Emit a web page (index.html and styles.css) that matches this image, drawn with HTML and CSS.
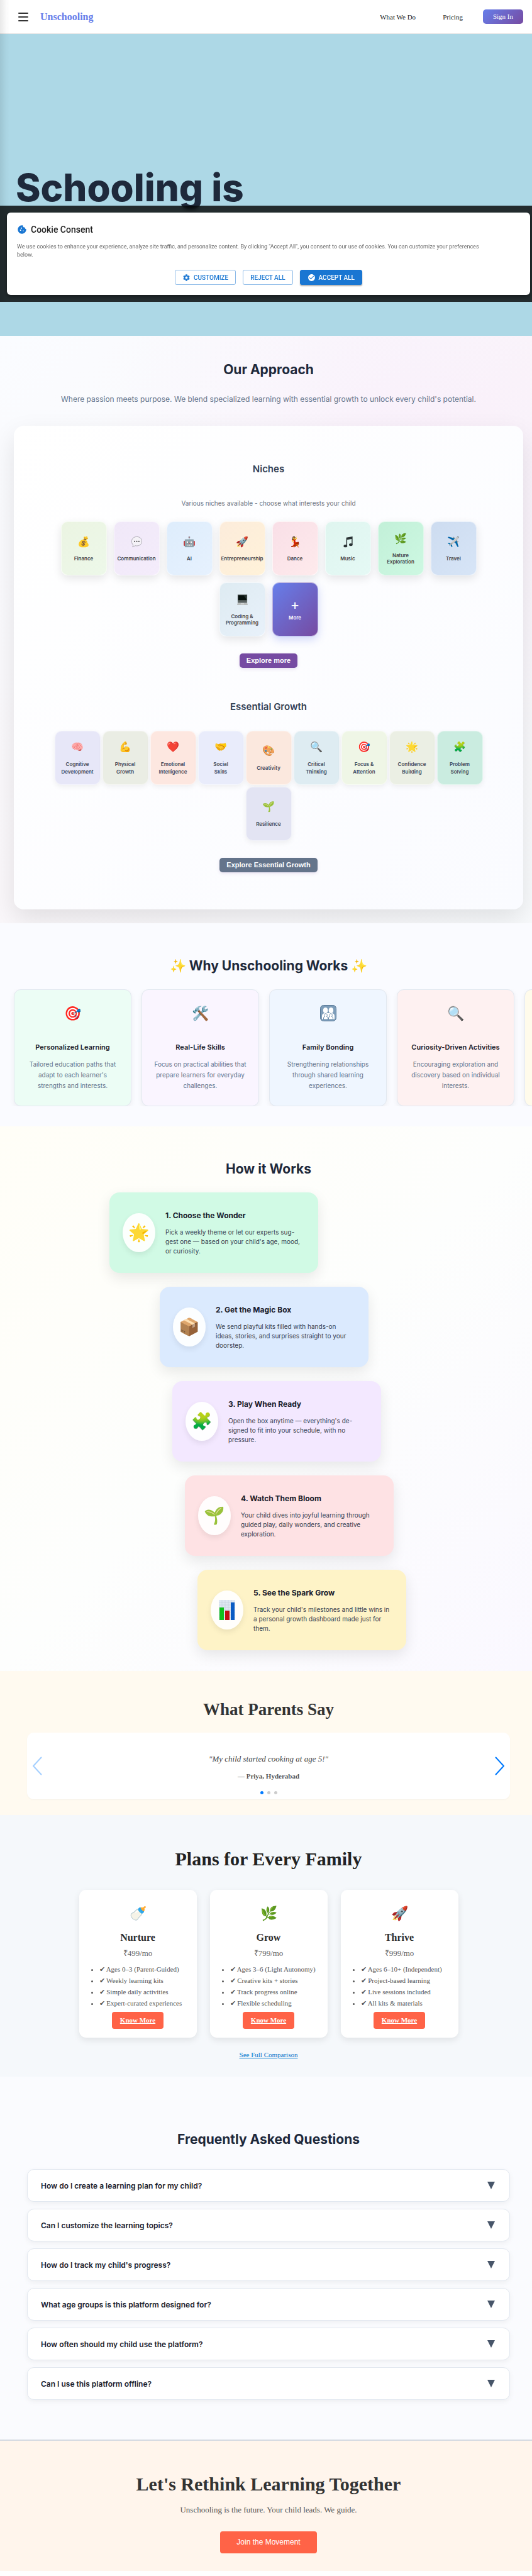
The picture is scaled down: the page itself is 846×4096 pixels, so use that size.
FILE: index.html
```html
<!DOCTYPE html>
<html lang="en">
<head>
<meta charset="utf-8">
<meta name="viewport" content="width=device-width, initial-scale=1">
<title>Unschooling</title>
<link rel="stylesheet" href="styles.css">
</head>
<body>
<header class="nav">
  <button class="menu" aria-label="Open menu"><span></span><span></span><span></span></button>
  <a class="logo" href="#">Unschooling</a>
  <nav class="links">
    <a href="#">What We Do</a>
    <a href="#">Pricing</a>
    <a class="signin" href="#">Sign In</a>
  </nav>
</header>

<main>
<section class="hero">
  <h1>Schooling is</h1>
</section>

<section class="approach">
  <h2>Our Approach</h2>
  <p class="lead">Where passion meets purpose. We blend specialized learning with essential growth to unlock every child's potential.</p>
  <div class="panel">
    <h3>Niches</h3>
    <p class="hint">Various niches available - choose what interests your child</p>
    <div class="tiles">
      <div class="tile finance"><span class="pic">💰</span><span>Finance</span></div>
      <div class="tile communication"><span class="pic"><svg viewBox="0 0 20 20"><path d="M10 1.500c5 0 8.500 3.300 8.500 7.700s-3.500 7.600-8.500 7.600c-1 0-2-.1-2.900-.4-1 1-2.500 1.900-4.300 2.100.8-.9 1.200-2 1.200-3.200C2.400 14 1.500 11.800 1.500 9.200c0-4.400 3.500-7.700 8.500-7.700z" fill="#f4f2f7" stroke="#aaa7b0"/><g fill="#444"><circle cx="6.400" cy="9.200" r="1.100"/><circle cx="10" cy="9.200" r="1.100"/><circle cx="13.600" cy="9.200" r="1.100"/></g></svg></span><span>Communication</span></div>
      <div class="tile ai"><span class="pic">🤖</span><span>AI</span></div>
      <div class="tile entre"><span class="pic">🚀</span><span>Entrepreneurship</span></div>
      <div class="tile dance"><span class="pic">💃</span><span>Dance</span></div>
      <div class="tile music"><span class="pic"><svg viewBox="0 0 20 20" fill="#2b3335"><path d="M7 3 17.500 1V14.500H16V5.200L8.500 6.700V17H7Z"/><ellipse cx="5.600" cy="17" rx="3" ry="2.300"/><ellipse cx="14.600" cy="14.800" rx="3" ry="2.300"/></svg></span><span>Music</span></div>
      <div class="tile nature"><span class="pic">🌿</span><span>Nature<br>Exploration</span></div>
      <div class="tile travel"><span class="pic">✈️</span><span>Travel</span></div>
      <div class="tile coding"><span class="pic"><svg viewBox="0 0 20 20"><path d="M2 1.500h16V12H2Z" fill="#59605f"/><path d="M3 2.500h14V11H3Z" fill="#06100d"/><path d="M12 2.500h5V10Z" fill="#26332f"/><path d="M2 12h16v3.500H2Z" fill="#6f7776"/><path d="M3 13h14M3 14.500h14" stroke="#3c4443" stroke-width=".6"/><path d="M2 15.500h16l1 3.500H1Z" fill="#b9bdbd"/><path d="M7.500 16h5l.5 2h-6Z" fill="#d5d8d8"/></svg></span><span>Coding &amp;<br>Programming</span></div>
      <div class="tile more"><span class="pic plus">+</span><span>More</span></div>
    </div>
    <button class="explore">Explore more</button>
    <h3 class="second">Essential Growth</h3>
    <div class="tiles growth">
      <div class="tile cognitive"><span class="pic">🧠</span><span>Cognitive<br>Development</span></div>
      <div class="tile physical"><span class="pic">💪</span><span>Physical<br>Growth</span></div>
      <div class="tile emotional"><span class="pic">❤️</span><span>Emotional<br>Intelligence</span></div>
      <div class="tile social"><span class="pic">🤝</span><span>Social<br>Skills</span></div>
      <div class="tile creative"><span class="pic">🎨</span><span>Creativity</span></div>
      <div class="tile critical"><span class="pic">🔍</span><span>Critical<br>Thinking</span></div>
      <div class="tile focus"><span class="pic">🎯</span><span>Focus &amp;<br>Attention</span></div>
      <div class="tile confidence"><span class="pic">🌟</span><span>Confidence<br>Building</span></div>
      <div class="tile problem"><span class="pic">🧩</span><span>Problem<br>Solving</span></div>
      <div class="tile resilience"><span class="pic">🌱</span><span>Resilience</span></div>
    </div>
    <button class="explore slate">Explore Essential Growth</button>
  </div>
</section>

<section class="why">
  <h2>✨ Why Unschooling Works ✨</h2>
  <div class="reasons">
    <article class="reason mint"><div class="pic">🎯</div><h3>Personalized Learning</h3><p>Tailored education paths that adapt to each learner's strengths and interests.</p></article>
    <article class="reason lilac"><div class="pic">🛠️</div><h3>Real-Life Skills</h3><p>Focus on practical abilities that prepare learners for everyday challenges.</p></article>
    <article class="reason sky"><div class="pic"><svg viewBox="0 0 26 26"><rect x=".5" y=".5" width="25" height="25" rx="5" fill="#7d9dba" stroke="#5a7a99"/><g fill="#fff"><ellipse cx="8.600" cy="8.500" rx="3.700" ry="4.500"/><ellipse cx="17.400" cy="8.500" rx="3.700" ry="4.500"/><path d="M3 22.500v-5c0-3 2-4.500 5-4.500h10c3 0 5 1.500 5 4.500v5Z"/></g><g fill="#fff" stroke="#6f90ae"><path d="M5.500 23v-2c0-1.500 1-2.500 2.400-2.700a2.400 2.400 0 1 1 2.200 0c1.400.2 2.400 1.200 2.400 2.700v2Z"/><path d="M13.500 23v-2c0-1.500 1-2.500 2.400-2.700a2.400 2.400 0 1 1 2.200 0c1.400.2 2.400 1.200 2.400 2.700v2Z"/></g></svg></div><h3>Family Bonding</h3><p>Strengthening relationships through shared learning experiences.</p></article>
    <article class="reason rose"><div class="pic">🔍</div><h3>Curiosity-Driven Activities</h3><p>Encouraging exploration and discovery based on individual interests.</p></article>
    <article class="reason cream"></article>
  </div>
</section>

<section class="how">
  <h2>How it Works</h2>
  <div class="steps">
    <article class="step s1"><div class="disc">🌟</div><div><h3>1. Choose the Wonder</h3><p>Pick a weekly theme or let our experts sug-<br>gest one — based on your child's age, mood,<br>or curiosity.</p></div></article>
    <article class="step s2"><div class="disc">📦</div><div><h3>2. Get the Magic Box</h3><p>We send playful kits filled with hands-on<br>ideas, stories, and surprises straight to your doorstep.</p></div></article>
    <article class="step s3"><div class="disc">🧩</div><div><h3>3. Play When Ready</h3><p>Open the box anytime — everything's de-<br>signed to fit into your schedule, with no<br>pressure.</p></div></article>
    <article class="step s4"><div class="disc">🌱</div><div><h3>4. Watch Them Bloom</h3><p>Your child dives into joyful learning through guided play, daily wonders, and creative exploration.</p></div></article>
    <article class="step s5"><div class="disc"><svg viewBox="0 0 26 32"><path d="M0 0h26v32H0Z" fill="#dfe8f2"/><path d="M0 4h26M0 8h26M0 12h26M0 16h26M0 20h26M0 24h26M0 28h26M5 0v32M10 0v32M15 0v32M20 0v32" stroke="#b9c9da" stroke-width=".5"/><path d="M1 12h7v20H1Z" fill="#0fbf1d"/><path d="M10 17h7v15h-7Z" fill="#c20d12"/><path d="M19 4h6v28h-6Z" fill="#0a5cc4"/></svg></div><div><h3>5. See the Spark Grow</h3><p>Track your child's milestones and little wins in<br>a personal growth dashboard made just for<br>them.</p></div></article>
  </div>
</section>

<section class="parents">
  <h2>What Parents Say</h2>
  <div class="quotes">
    <button class="arrow prev" aria-label="Previous"><svg viewBox="0 0 16 30"><path d="M14.500 1.500 2 15 14.500 28.500"/></svg></button>
    <figure class="quote">
      <blockquote>"My child started cooking at age 5!"</blockquote>
      <figcaption>— Priya, Hyderabad</figcaption>
      <div class="dots"><i class="on"></i><i></i><i></i></div>
    </figure>
    <button class="arrow next" aria-label="Next"><svg viewBox="0 0 16 30"><path d="M1.500 1.500 14 15 1.500 28.500"/></svg></button>
  </div>
</section>

<section class="plans">
  <h2>Plans for Every Family</h2>
  <div class="plan-row">
    <article class="plan"><div class="pic">🍼</div><h3>Nurture</h3><p>₹499/mo</p>
      <ul><li>✔ Ages 0–3 (Parent-Guided)</li><li>✔ Weekly learning kits</li><li>✔ Simple daily activities</li><li>✔ Expert-curated experiences</li></ul><a href="#">Know More</a></article>
    <article class="plan"><div class="pic">🌿</div><h3>Grow</h3><p>₹799/mo</p>
      <ul><li>✔ Ages 3–6 (Light Autonomy)</li><li>✔ Creative kits + stories</li><li>✔ Track progress online</li><li>✔ Flexible scheduling</li></ul><a href="#">Know More</a></article>
    <article class="plan"><div class="pic">🚀</div><h3>Thrive</h3><p>₹999/mo</p>
      <ul><li>✔ Ages 6–10+ (Independent)</li><li>✔ Project-based learning</li><li>✔ Live sessions included</li><li>✔ All kits &amp; materials</li></ul><a href="#">Know More</a></article>
  </div>
  <a class="compare" href="#">See Full Comparison</a>
</section>

<section class="faq">
  <h2>Frequently Asked Questions</h2>
  <div class="faq-list">
    <button>How do I create a learning plan for my child?<svg viewBox="0 0 12 12"><path d="M0 0H12L6 12Z"/></svg></button>
    <button>Can I customize the learning topics?<svg viewBox="0 0 12 12"><path d="M0 0H12L6 12Z"/></svg></button>
    <button>How do I track my child's progress?<svg viewBox="0 0 12 12"><path d="M0 0H12L6 12Z"/></svg></button>
    <button>What age groups is this platform designed for?<svg viewBox="0 0 12 12"><path d="M0 0H12L6 12Z"/></svg></button>
    <button>How often should my child use the platform?<svg viewBox="0 0 12 12"><path d="M0 0H12L6 12Z"/></svg></button>
    <button>Can I use this platform offline?<svg viewBox="0 0 12 12"><path d="M0 0H12L6 12Z"/></svg></button>
  </div>
</section>

<section class="cta">
  <h2>Let's Rethink Learning Together</h2>
  <p>Unschooling is the future. Your child leads. We guide.</p>
  <button>Join the Movement</button>
</section>
</main>

<div class="cookie-layer">
  <div class="cookie" role="dialog" aria-labelledby="cookie-title">
    <h2 id="cookie-title"><svg viewBox="0 0 24 24"><path d="M21.950 10.990c-1.790-.03-3.700-1.950-2.680-4.220-2.980 1-5.770-1.590-5.190-4.560C6.950.710 2 6.580 2 12c0 5.520 4.480 10 10 10 5.890 0 10.540-5.080 9.950-11.010zM8.500 15c-.83 0-1.500-.67-1.500-1.500S7.670 12 8.500 12s1.500.67 1.500 1.500S9.330 15 8.500 15zm2-5C9.670 10 9 9.330 9 8.500S9.670 7 10.500 7s1.500.67 1.500 1.500-.67 1.500-1.500 1.500zm4.500 6c-.55 0-1-.45-1-1s.45-1 1-1 1 .45 1 1-.45 1-1 1z"/></svg>Cookie Consent</h2>
    <p>We use cookies to enhance your experience, analyze site traffic, and personalize content. By clicking "Accept All", you consent to our use of cookies. You can customize your preferences<br>below.</p>
    <div class="choices">
      <button><svg viewBox="0 0 24 24"><path d="M19.140 12.940c.04-.3.06-.61.06-.94 0-.32-.02-.64-.07-.94l2.030-1.580c.18-.14.23-.41.12-.61l-1.920-3.320c-.12-.22-.37-.29-.59-.22l-2.390.96c-.5-.38-1.030-.7-1.620-.94l-.36-2.540c-.04-.24-.24-.41-.48-.41h-3.840c-.24 0-.43.17-.47.41l-.36 2.540c-.59.24-1.130.57-1.620.94l-2.390-.96c-.22-.08-.47 0-.59.22L2.740 8.870c-.12.21-.08.47.12.61l2.030 1.580c-.05.3-.09.63-.09.94s.02.64.07.94l-2.030 1.580c-.18.14-.23.41-.12.61l1.920 3.320c.12.22.37.29.59.22l2.390-.96c.5.38 1.030.7 1.620.94l.36 2.540c.05.24.24.41.48.41h3.840c.24 0 .44-.17.47-.41l.36-2.540c.59-.24 1.130-.56 1.620-.94l2.390.96c.22.08.47 0 .59-.22l1.920-3.320c.12-.22.07-.47-.12-.61l-2.010-1.580zM12 15.600c-1.980 0-3.600-1.620-3.600-3.600s1.620-3.600 3.600-3.600 3.600 1.620 3.600 3.600-1.620 3.600-3.600 3.600z"/></svg>CUSTOMIZE</button>
      <button>REJECT ALL</button>
      <button class="accept"><svg viewBox="0 0 24 24"><path d="M12 2C6.480 2 2 6.480 2 12s4.480 10 10 10 10-4.480 10-10S17.520 2 12 2zm-2 15-5-5 1.410-1.410L10 14.170l7.590-7.590L19 8l-9 9z"/></svg>ACCEPT ALL</button>
    </div>
  </div>
</div>
</body>
</html>
```
FILE: styles.css
```css
* { box-sizing: border-box; }
body {
  position: relative;
  margin: 0;
  padding-bottom: 8px;
  background: #fff;
  font-family: "Liberation Serif", "Times New Roman", serif;
  color: #1e293b;
}
body::before {
  content: "";
  position: absolute;
  top: 0;
  left: 0;
  width: 16px;
  height: 480px;
  background: linear-gradient(90deg, rgba(0,0,0,.09), rgba(0,0,0,.02) 60%, rgba(0,0,0,0));
}
h1, h2, h3, p, ul, figure, blockquote { margin: 0; }
button { font: inherit; border: 0; padding: 0; cursor: pointer; }

.nav {
  display: flex;
  align-items: center;
  height: 54px;
  padding: 0 14px 0 29px;
  border-bottom: 1px solid #e3e3e3;
}
.menu { display: grid; gap: 4px; width: 16px; margin-right: 19px; background: none; }
.menu span { height: 2px; border-radius: 1px; background: #333; }
.logo {
  font-size: 16px;
  font-weight: 700;
  text-decoration: none;
  color: #667eea;
}
.links { display: flex; align-items: center; margin-left: auto; font-size: 11px; }
.links a { color: #222; text-decoration: none; margin-right: 43px; }
.links a:nth-child(2) { margin-right: 32px; }
.links .signin {
  margin: 0;
  padding: 0 16px;
  line-height: 23px;
  border-radius: 5px;
  color: #fff;
  background: linear-gradient(135deg, #667eea, #764ba2);
}

.hero { height: 480px; padding: 212px 25px 0; background: #add8e6; }
.hero h1 { font: 800 60px/64px Inter, sans-serif; color: #1e293b; }

.cookie-layer {
  position: absolute;
  top: 327px;
  left: 0;
  right: 0;
  padding: 11px 3px 11px 11px;
  background: rgba(0,0,0,.8);
  -webkit-backdrop-filter: blur(3px);
  backdrop-filter: blur(3px);
  font-family: Roboto, sans-serif;
}
.cookie {
  padding: 17px 16px 16px;
  border-radius: 6px;
  background: #fff;
  box-shadow: 0 3px 6px rgba(0,0,0,.4);
}
.cookie h2 {
  display: flex;
  align-items: center;
  gap: 6px;
  margin-bottom: 11px;
  font-size: 14px;
  font-weight: 500;
  line-height: 20px;
  color: #212121;
}
.cookie h2 svg { width: 16px; height: 16px; fill: #1976d2; }
.cookie p { font-size: 9px; line-height: 13px; color: #666; }
.choices { display: flex; justify-content: center; gap: 11px; margin-top: 17px; }
.choices button {
  display: flex;
  align-items: center;
  gap: 5px;
  height: 24px;
  padding: 0 11px;
  border: 1px solid #8cbae8;
  border-radius: 3px;
  background: #fff;
  color: #1976d2;
  font-size: 10px;
  font-weight: 500;
}
.choices svg { width: 13px; height: 13px; fill: currentColor; }
.choices .accept {
  border-color: #1976d2;
  background: #1976d2;
  color: #fff;
  box-shadow: 0 2px 2px rgba(0,0,0,.3);
}

.approach, .why, .how, .faq { font-family: Inter, sans-serif; }
.approach h2, .why h2, .how h2, .faq h2 {
  font-size: 21px;
  font-weight: 700;
  line-height: 30px;
  text-align: center;
  color: #1e293b;
}
.approach {
  padding: 39px 14px 22px 22px;
  background:
    radial-gradient(circle at 80% 20%, rgba(240,147,251,.08), rgba(240,147,251,0) 50%),
    linear-gradient(135deg, #fafcff 0%, #faf7fa 50%, #f8fafc 100%);
  text-align: center;
}
.approach .lead { margin: 22px 0 32px; font-size: 12px; line-height: 20px; color: #64748b; }
.panel {
  padding: 59px 0;
  border-radius: 16px;
  background: linear-gradient(135deg, #fff, #fafbff);
  box-shadow: 0 16px 40px rgba(0,0,0,.1);
}
.panel h3 { font-size: 15px; font-weight: 600; line-height: 20px; color: #334155; }
.panel .second { margin: 52px 0 28px; }
.hint { margin: 36px 0 21px; font-size: 10px; line-height: 16px; color: #6b7280; }
.tiles {
  display: flex;
  flex-wrap: wrap;
  justify-content: center;
  gap: 11px;
  max-width: 662px;
  margin: 0 auto 27px;
}
.tile {
  display: flex;
  flex-direction: column;
  align-items: center;
  justify-content: center;
  gap: 12px;
  width: 73px;
  height: 86px;
  border: 1px solid rgba(255,255,255,.5);
  border-radius: 11px;
  box-shadow: 0 5px 14px rgba(0,0,0,.1);
  font-size: 8px;
  font-weight: 600;
  line-height: 10px;
  color: #3f4247;
}
.tile .pic { font-size: 16px; line-height: 20px; font-weight: 400; }
.tile .pic svg { display: block; width: 19px; height: 19px; }
.growth { gap: 3px; max-width: 686px; }
.growth .tile {
  box-shadow: 0 3px 8px rgba(0,0,0,.06);
  line-height: 12px;
  color: #3d4759;
}
.finance { background: linear-gradient(135deg, #ebf4e2, #edf8e9); }
.communication { background: linear-gradient(135deg, #f0e8f8, #f4ecfb); }
.ai { background: linear-gradient(135deg, #deedfc, #e6f1fe); }
.entre { background: linear-gradient(135deg, #fcecdb, #fff2d9); }
.dance { background: linear-gradient(135deg, #f9dfe7, #feeaec); }
.music { background: linear-gradient(135deg, #dff5ef, #e5f9f5); }
.nature { background: linear-gradient(135deg, #c2f0d8, #cdf8e2); }
.travel { background: linear-gradient(135deg, #cddcf0, #d7e5f7); }
.coding { background: linear-gradient(135deg, #deebf2, #e8f1fa); }
.more {
  gap: 6px;
  background: linear-gradient(135deg, #667eea, #764ba2);
  box-shadow: 0 5px 14px rgba(102,126,234,.3);
  color: #fff;
}
.tile .plus { font-size: 22px; }
.cognitive { background: #e7e7f8; }
.physical { background: #eaede4; }
.emotional { background: #fde7e0; }
.social { background: #e9ecfb; }
.creative { background: #fbe8de; }
.critical { background: #deecf2; }
.focus { background: #eff6e6; }
.confidence { background: #ebefe4; }
.problem { background: #caece0; }
.resilience { background: #e3e4f3; }
.explore {
  display: block;
  height: 23px;
  margin: 0 auto;
  padding: 0 11px;
  border-radius: 5px;
  background: #764ba2;
  color: #fff;
  font: 700 11px/23px "Liberation Sans", Arial, sans-serif;
  box-shadow: 0 2px 5px rgba(118,75,162,.15);
}
.slate { background: #64748b; }

.why { overflow: hidden; padding: 53px 0 32px 22px; background: #fafbff; }
.why h2 { padding-right: 14px; }
.reasons { display: flex; gap: 16px; margin-top: 22px; margin-left: -22px; padding-left: 22px; overflow: hidden; }
.reason {
  flex: 0 0 187px;
  height: 186px;
  padding: 22px 15px;
  border: 1px solid #e2e8f0;
  border-radius: 11px;
  box-shadow: 0 3px 8px rgba(0,0,0,.06);
  text-align: center;
}
.reason .pic { height: 30px; font-size: 22px; line-height: 30px; }
.reason .pic svg { display: block; width: 26px; height: 30px; margin: 0 auto; }
.reason h3 { margin: 30px -10px 10px; font-size: 11px; font-weight: 600; line-height: 18px; color: #1a202c; }
.reason p { font-size: 10px; line-height: 17px; color: #64748b; }
.mint { background: #ecfdf5; }
.lilac { background: #faf5ff; }
.sky { background: #eff6ff; }
.rose { background: #fef1f1; }
.cream { background: #fffbeb; }

.how {
  padding: 53px 14px 33px 22px;
  background: linear-gradient(135deg, #fffef7 0%, #fdfefd 50%, #faf8ff 100%);
}
.steps { display: grid; gap: 22px; margin-top: 22px; }
.step {
  display: flex;
  align-items: center;
  gap: 16px;
  width: 332px;
  height: 128px;
  padding: 0 16px 0 21px;
  border-radius: 16px;
  box-shadow: 0 8px 22px rgba(0,0,0,.09);
}
.disc {
  flex: 0 0 52px;
  height: 62px;
  border-radius: 50%;
  background: rgba(255,255,255,.92);
  box-shadow: 0 4px 10px rgba(0,0,0,.08);
  font-size: 27px;
  line-height: 62px;
  text-align: center;
}
.disc svg { display: block; width: 26px; height: 32px; margin: 15px auto; }
.step h3 { margin-bottom: 10px; font-size: 12px; font-weight: 700; line-height: 18px; color: #1a202c; }
.step p { font-size: 10px; line-height: 15px; color: #374151; }
.s1 { margin-left: 152px; background: #d1fae5; }
.s2 { margin-left: 232px; background: #dbeafe; }
.s3 { margin-left: 252px; background: #f3e8ff; }
.s4 { margin-left: 272px; background: #fee2e4; }
.s5 { margin-left: 292px; background: #fef3c7; }

.parents { padding: 45px 35px 25px 43px; background: #fffaf0; text-align: center; }
.parents h2 { font-size: 27px; line-height: 32px; color: #333; }
.quotes {
  display: flex;
  align-items: center;
  height: 106px;
  margin-top: 21px;
  padding: 0 8px;
  border-radius: 11px;
  background: #fff;
  box-shadow: 0 1px 2px rgba(0,0,0,.04);
}
.arrow { width: 16px; height: 30px; background: none; }
.arrow svg { display: block; width: 16px; height: 30px; fill: none; stroke: #007aff; stroke-width: 2; stroke-linecap: round; stroke-linejoin: round; }
.prev { opacity: .35; }
.quote { flex: 1; padding-top: 26px; }
.quote blockquote { font-size: 13px; font-style: italic; line-height: 16px; color: #444; }
.quote figcaption { margin: 12px 0 17px; font-size: 11px; font-weight: 700; line-height: 14px; color: #555; }
.dots { display: flex; justify-content: center; gap: 6px; }
.dots i { width: 5px; height: 5px; border-radius: 50%; background: #ccc; }
.dots .on { background: #007aff; }

.plans { padding: 53px 14px 28px 22px; background: #f5f8fb; text-align: center; }
.plans h2 { font-size: 30px; line-height: 34px; color: #222; }
.plan-row { display: flex; justify-content: center; gap: 21px; margin: 32px 0 20px; }
.plan {
  width: 187px;
  padding: 23px 16px 14px;
  border-radius: 11px;
  background: #fff;
  box-shadow: 0 4px 11px rgba(0,0,0,.09);
}
.plan .pic { height: 30px; font-size: 22px; line-height: 30px; }
.plan h3 { margin: 13px 0 7px; font-size: 16px; line-height: 20px; color: #2c2c2c; }
.plan p { height: 16px; font-size: 13px; line-height: 16px; color: #666; }
.plan ul { margin: 8px 0 5px; padding-left: 16px; text-align: left; font-size: 11px; line-height: 18px; color: #555; white-space: nowrap; }
.plan li { height: 18px; }
.plan a {
  display: inline-block;
  padding: 0 13px;
  border-radius: 4px;
  background: #ff6347;
  color: #fff;
  font-size: 11px;
  font-weight: 700;
  line-height: 27px;
  vertical-align: top;
}
.compare { display: block; font-size: 11px; line-height: 14px; color: #0077cc; }

.faq { padding: 85px 35px 63px 43px; background: #fafbfe; }
.faq-list { display: grid; gap: 11px; margin-top: 32px; }
.faq-list button {
  display: flex;
  align-items: center;
  justify-content: space-between;
  height: 52px;
  padding: 0 23px 0 21px;
  border: 1px solid #e2e8f0;
  border-radius: 11px;
  background: #fff;
  box-shadow: 0 3px 8px rgba(0,0,0,.05);
  font-size: 12px;
  font-weight: 600;
  color: #1a202c;
}
.faq-list svg { width: 12px; height: 12px; fill: #475569; }

.cta { padding: 52px 14px 28px 22px; border-top: 2px solid #d5dae2; background: #fff5ec; text-align: center; }
.cta h2 { font-size: 30px; line-height: 34px; color: #333; }
.cta p { margin: 15px 0 25px; font-size: 13px; line-height: 18px; color: #555; }
.cta button {
  display: block;
  margin: 0 auto;
  padding: 0 26px;
  border-radius: 4px;
  background: #ff6347;
  color: #fff;
  font: 12px/35px "Liberation Sans", Arial, sans-serif;
}
```
